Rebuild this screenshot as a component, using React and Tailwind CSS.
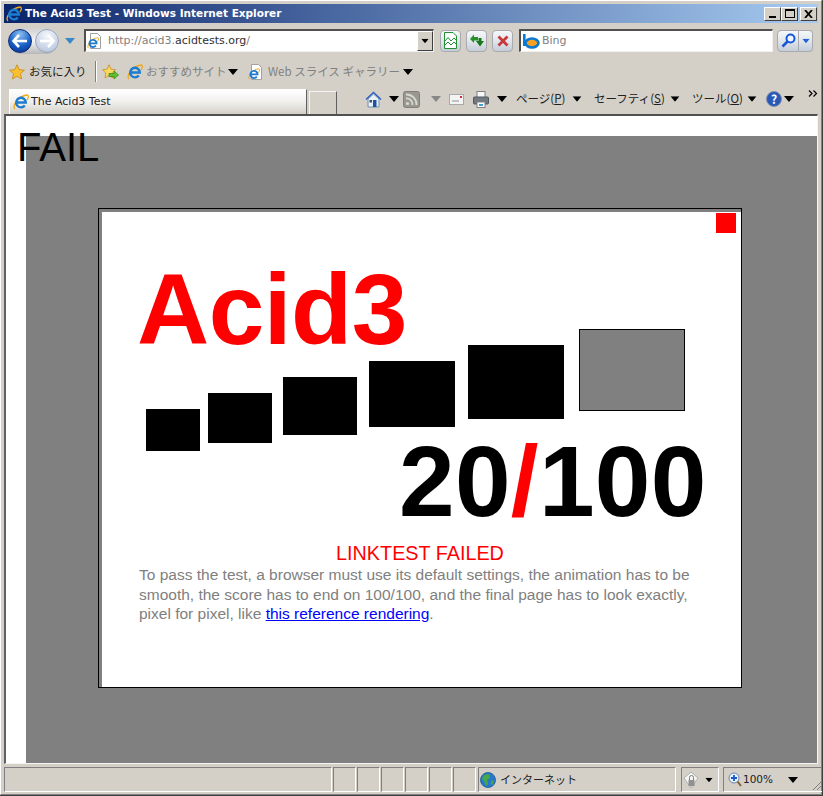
import React from 'react';

const arial = 'font-["Liberation_Sans",Arial,sans-serif]';
const ui = 'font-["Noto_Sans_CJK_JP","Noto_Sans",sans-serif]';
const dejavu = 'font-["DejaVu_Sans",sans-serif]';

function Arrow({ className = '', color = '#000' }) {
    return (
        <svg width="10" height="6" viewBox="0 0 10 6" className={`shrink-0 ${className}`}>
            <polygon points="0,0 10,0 5,6" fill={color} />
        </svg>
    );
}

function IeLogo({ size = 16, className = '' }) {
    return (
        <svg width={size} height={size} viewBox="0 0 16 16" className={`shrink-0 ${className}`}>
            <path d="M2 15 C-1 12 5 2 14 1 C16 1 15.500 4 14 6" fill="none" stroke="#f0a818" strokeWidth="1.300" />
            <path d="M4 8.500 H12.800 A4.800 4.800 0 1 0 11.800 11.500" fill="none" stroke="#1c7cd0" strokeWidth="2.400" />
        </svg>
    );
}

function PageIcon({ className = '' }) {
    return (
        <div className={`relative shrink-0 w-[15px] h-[16px] ${className}`}>
            <svg width="15" height="16" viewBox="0 0 15 16">
                <path d="M3.500 .5 H10.500 L13.500 3.500 V15.500 H3.500 Z" fill="#fff" stroke="#a0a0a0" />
            </svg>
            <IeLogo size={12} className="absolute left-0 top-[4px]" />
        </div>
    );
}

function Star({ className = '' }) {
    return (
        <svg width="16" height="16" viewBox="0 0 16 16" className={`shrink-0 ${className}`}>
            <polygon points="8,.8 10.200,5.600 15.400,6.200 11.500,9.700 12.600,15 8,12.300 3.400,15 4.500,9.700 .6,6.200 5.800,5.600" fill="#f8c030" stroke="#c88818" strokeWidth=".8" />
        </svg>
    );
}

function AddFavIcon({ className = '' }) {
    return (
        <svg width="17" height="16" viewBox="0 0 17 16" className={`shrink-0 ${className}`}>
            <polygon points="7,.8 9,5.200 13.600,5.800 10.200,9 11,14 7,11.500 3,14 3.800,9 .5,5.800 5,5.200" fill="#f8d860" stroke="#c89020" strokeWidth=".8" />
            <path d="M7 9.500 H12 V7 L16.500 11 L12 15 V12.500 H7 Z" fill="#60c030" stroke="#308010" strokeWidth=".7" />
        </svg>
    );
}

function GlassButton({ className = '', children }) {
    return (
        <div className={`flex items-center justify-center h-[22px] border border-[#a8aab0] rounded-[4px] bg-[linear-gradient(#f6f8fa,#e0e6ec_50%,#c4ccd6)] shrink-0 ${className}`}>
            {children}
        </div>
    );
}

function WinButton({ children, className = '' }) {
    return (
        <div className={`flex items-center justify-center h-[14px] bg-[#d4d0c8] border border-t-white border-l-white border-r-[#404040] border-b-[#404040] ${className}`}>
            {children}
        </div>
    );
}

function TitleBar() {
    return (
        <div className="flex items-center h-[19px] pl-[2px] pr-[1px] bg-[linear-gradient(90deg,#0a246a,#a6caf0)] shrink-0">
            <IeLogo size={16} />
            <span className={`ml-[3px] text-white font-bold text-[10.500px] leading-[19px] whitespace-nowrap ${dejavu}`}>The Acid3 Test - Windows Internet Explorer</span>
            <div className="ml-auto flex">
                <WinButton className="w-[17px]"><div className="w-[7px] h-[2px] bg-black mt-[7px] mr-[1px]" /></WinButton>
                <WinButton className="w-[17px]"><div className="w-[10px] h-[9px] border border-black border-t-2" /></WinButton>
                <WinButton className="w-[17px] ml-[2px]">
                    <svg width="9" height="8" viewBox="0 0 9 8"><path d="M1 0 L8 8 M8 0 L1 8" stroke="#000" strokeWidth="1.800" /></svg>
                </WinButton>
            </div>
        </div>
    );
}

function NavCircle({ light, flip }) {
    return (
        <div className={`flex items-center justify-center w-[24px] h-[24px] rounded-full border shrink-0 ${light ? 'border-[#98a4b8] bg-[radial-gradient(circle_at_50%_25%,#f4f7fb,#c4d0e4_70%,#a8b6d0)]' : 'border-[#102a70] bg-[radial-gradient(circle_at_50%_20%,#8cc0f0,#1860c8_55%,#0a2c88)]'}`}>
            <svg width="16" height="14" viewBox="0 0 16 14" className={flip ? 'rotate-180' : ''}>
                <path d="M7 1 L1.500 7 L7 13 M2 7 H15" fill="none" stroke="#fff" strokeWidth="2.600" />
            </svg>
        </div>
    );
}

function AddressRow() {
    return (
        <div className="flex items-center h-[33px] pl-[4px] pt-[2px] shrink-0">
            <div className="flex items-center gap-[3px] h-[26px] rounded-full bg-[linear-gradient(#d0d0d0,#f4f4f4_50%,#b8b8b8)]">
                <NavCircle />
                <NavCircle light flip />
            </div>
            <Arrow color="#3a88c8" className="ml-[6px]" />
            <div className="flex items-center w-[350px] h-[23px] ml-[9px] bg-white border-t-2 border-l-2 border-t-[#505050] border-l-[#505050] border-r border-b border-r-[#f0f0f0] border-b-[#f0f0f0]">
                <PageIcon className="ml-[1px]" />
                <span className={`ml-[6px] text-[11px] text-[#808080] whitespace-nowrap ${dejavu}`}>http://acid3.<span className="text-[#303030]">acidtests.org</span>/</span>
                <div className="ml-auto flex items-center justify-center w-[16px] h-[20px] bg-[#d4d0c8] border border-t-white border-l-white border-r-[#404040] border-b-[#404040]">
                    <Arrow className="scale-75" />
                </div>
            </div>
            <GlassButton className="w-[21px] ml-[6px]">
                <svg width="15" height="17" viewBox="0 0 15 17">
                    <path d="M1.500 .5 H10 L13.500 4 V16.500 H1.500 Z" fill="#fff" stroke="#209030" />
                    <path d="M2 9 L5 5.500 L8 9 L11 6 L13 8 M2 13 L5 10 L8 13 L11 10 L13 12" fill="none" stroke="#209030" />
                </svg>
            </GlassButton>
            <GlassButton className="w-[21px] ml-[5px]">
                <svg width="16" height="15" viewBox="0 0 16 15">
                    <path d="M1 6 L5 1.500 V4 H9 V7.500 H5 V10 Z" fill="#289028" />
                    <path d="M15 8 L11 13.500 L7 8 H9.500 V5 H12.500 V8 Z" fill="#187818" />
                </svg>
            </GlassButton>
            <GlassButton className="w-[21px] ml-[5px]">
                <svg width="12" height="12" viewBox="0 0 12 12"><path d="M1.500 1.500 L10.500 10.500 M10.500 1.500 L1.500 10.500" stroke="#c83838" strokeWidth="2.800" /></svg>
            </GlassButton>
            <div className="flex items-center w-[254px] h-[23px] ml-[6px] bg-white border-t-2 border-l-2 border-t-[#505050] border-l-[#505050] border-r border-b border-r-[#f0f0f0] border-b-[#f0f0f0]">
                <svg width="18" height="15" viewBox="0 0 18 15" className="ml-[1px] shrink-0">
                    <ellipse cx="10" cy="9" rx="6.500" ry="4.500" fill="#f8a020" stroke="#0878d0" strokeWidth="2.600" />
                    <rect x="1" y="0" width="2.600" height="12" fill="#0878d0" />
                </svg>
                <span className={`ml-[2px] text-[11px] text-[#808080] ${dejavu}`}>Bing</span>
            </div>
            <GlassButton className="w-[22px] ml-[4px] rounded-r-none">
                <svg width="15" height="15" viewBox="0 0 15 15">
                    <circle cx="9.500" cy="5.500" r="4" fill="#f0f6ff" stroke="#1858d8" strokeWidth="2" />
                    <path d="M6.500 8.500 L1.500 13.500" stroke="#1858d8" strokeWidth="2.600" />
                </svg>
            </GlassButton>
            <GlassButton className="w-[14px] rounded-l-none border-l-0">
                <Arrow color="#2060d0" className="scale-75" />
            </GlassButton>
        </div>
    );
}

function FavoritesRow() {
    return (
        <div className={`flex items-center h-[30px] pl-[5px] pt-[1px] text-[11.500px] shrink-0 ${ui}`}>
            <Star />
            <span className="ml-[4px] w-[56px] text-[#202020] whitespace-nowrap">お気に入り</span>
            <div className="ml-[10px] w-[2px] h-[21px] border-l border-l-[#808080] border-r border-r-white" />
            <AddFavIcon className="ml-[5px]" />
            <IeLogo className="ml-[8px]" />
            <span className="ml-[3px] w-[79px] text-[#808080] whitespace-nowrap">おすすめサイト</span>
            <Arrow className="ml-[3px]" />
            <PageIcon className="ml-[10px]" />
            <span className="ml-[5px] w-[130px] text-[#808080] whitespace-nowrap">Web スライス ギャラリー</span>
            <Arrow className="ml-[5px]" />
        </div>
    );
}

function MenuItem({ label, hot, width, className = '' }) {
    return (
        <span className={`text-[11.500px] text-[#202020] whitespace-nowrap ${className}`} style={{ width }}>
            {label}(<span className="underline">{hot}</span>)
        </span>
    );
}

function TabRow() {
    return (
        <div className={`flex items-end h-[28px] pl-[5px] shrink-0 ${ui}`}>
            <div className="flex items-center w-[298px] h-[25px] pl-[3px] border border-b-0 border-t-white border-l-white border-r-[#606060] bg-[linear-gradient(#ffffff,#f0efec_50%,#d4d0c8)]">
                <IeLogo />
                <span className={`ml-[2px] text-[11px] text-[#202020] whitespace-nowrap ${dejavu}`}>The Acid3 Test</span>
            </div>
            <div className="ml-[2px] w-[28px] h-[23px] border border-b-0 border-t-[#f4f4f4] border-l-[#f4f4f4] border-r-[#606060] bg-[#d4d0c8]" />
            <div className="flex items-center self-start w-[481px] h-[26px] mt-0">
                <svg width="17" height="17" viewBox="0 0 17 17" className="ml-[28px] shrink-0">
                    <path d="M1 8.500 L8.500 1.500 L16 8.500" fill="none" stroke="#3060c0" strokeWidth="1.600" />
                    <path d="M3 8 L8.500 3 L14 8 V16 H3 Z" fill="#e8f0f8" stroke="#7090b0" />
                    <rect x="8" y="9" width="3.500" height="7" fill="#2050a0" />
                    <rect x="4.500" y="9" width="2.500" height="2.500" fill="#405060" />
                </svg>
                <Arrow className="ml-[7px]" />
                <svg width="17" height="17" viewBox="0 0 17 17" className="ml-[4px] shrink-0">
                    <rect x=".5" y=".5" width="16" height="16" rx="2" fill="#989890" stroke="#808078" />
                    <circle cx="4.500" cy="12.500" r="1.600" fill="#d8d8d0" />
                    <path d="M3 7.500 A6 6 0 0 1 9.500 14 M3 3.500 A10 10 0 0 1 13.500 14" fill="none" stroke="#d8d8d0" strokeWidth="1.800" />
                </svg>
                <Arrow color="#888888" className="ml-[11px]" />
                <svg width="15" height="11" viewBox="0 0 15 11" className="ml-[8px] shrink-0">
                    <rect x=".5" y=".5" width="14" height="10" fill="#f4f4f4" stroke="#a8a8a8" />
                    <rect x="11" y="2" width="2" height="2" fill="#d03030" />
                    <path d="M3 7 H10" stroke="#909090" />
                </svg>
                <svg width="16" height="17" viewBox="0 0 16 17" className="ml-[9px] shrink-0">
                    <rect x="4" y=".5" width="8" height="6" fill="#f8f8f8" stroke="#808080" />
                    <rect x=".5" y="6" width="15" height="7" rx="1" fill="#707880" stroke="#505860" />
                    <rect x="4" y="11" width="8" height="5.500" fill="#fff" stroke="#808080" />
                    <rect x="6" y="13" width="4" height="2" fill="#40a0d0" />
                </svg>
                <Arrow className="ml-[8px]" />
                <MenuItem label="ページ" hot="P" className="ml-[9px]" width={50} />
                <Arrow className="ml-[6px] scale-90" />
                <MenuItem label="セーフティ" hot="S" className="ml-[12px]" width={71} />
                <Arrow className="ml-[5px] scale-90" />
                <MenuItem label="ツール" hot="O" className="ml-[12px]" width={51} />
                <Arrow className="ml-[4px] scale-90" />
                <div className="ml-[9px] flex items-center justify-center w-[16px] h-[16px] rounded-full bg-[#2858b8] border border-[#8090a8] text-white text-[12px] font-bold leading-none shrink-0">?</div>
                <Arrow className="ml-[2px]" />
                <svg width="10" height="7" viewBox="0 0 10 7" className="ml-[14px] mb-[12px] shrink-0">
                    <path d="M1 .5 L4 3.500 L1 6.500 M5.500 .5 L8.500 3.500 L5.500 6.500" fill="none" stroke="#000" strokeWidth="1.200" />
                </svg>
            </div>
        </div>
    );
}

function Bucket({ w, h, top, left, gray }) {
    return (
        <div
            className={gray ? 'shrink-0 bg-[#808080] border border-black' : 'shrink-0 bg-black'}
            style={{ width: w, height: h, marginTop: top, marginLeft: left }}
        />
    );
}

function AcidBox() {
    return (
        <div className={`ml-[72px] mt-[72px] w-[644px] h-[480px] bg-white border border-black ${arial}`}>
            <div className="w-full h-full border-t-[3px] border-l-[3px] border-[#808080] flex flex-col">
                <div className="self-end w-[20px] h-[20px] mt-[1px] mr-[5px] bg-[#ff0000] shrink-0" />
                <div className="mt-[28px] pl-[35px] h-[68px] text-[100px] leading-[96px] font-bold tracking-[-0.5px] text-[#ff0000] shrink-0">Acid3</div>
                <div className="flex items-start pl-[44px] h-[122px] shrink-0">
                    <Bucket w={54} h={42} top={80} left={0} />
                    <Bucket w={64} h={50} top={64} left={8} />
                    <Bucket w={74} h={58} top={48} left={11} />
                    <Bucket w={86} h={66} top={32} left={12} />
                    <Bucket w={96} h={74} top={16} left={13} />
                    <Bucket w={106} h={82} top={0} left={15} gray />
                </div>
                <div className="pl-[297px] h-[61px] text-[100px] leading-[61px] font-bold tracking-[0.3px] text-black whitespace-nowrap shrink-0">20<span className="text-[#ff0000]">/</span>100</div>
                <div className="mt-[30px] w-[636px] text-center text-[19.800px] leading-[22px] text-[#ff0000]">LINKTEST FAILED</div>
                <p className="mt-[1px] ml-[37px] text-[15.500px] leading-[19.500px] text-[#808080] whitespace-nowrap">
                    To pass the test, a browser must use its default settings, the animation has to be<br />
                    smooth, the score has to end on 100/100, and the final page has to look exactly,<br />
                    pixel for pixel, like <a className="text-[#0000ff] underline">this reference rendering</a>.
                </p>
            </div>
        </div>
    );
}

function Content() {
    return (
        <div className="relative flex-1 min-h-0 flex flex-col bg-white pl-[20px] pt-[20px] border-t-2 border-l-2 border-t-[#505050] border-l-[#606060] border-r border-b border-r-[#f4f4f4] border-b-[#f4f4f4]">
            <div className="flex-1 bg-[#808080] overflow-hidden">
                <AcidBox />
            </div>
            <div className={`absolute left-[11px] top-[8px] text-[40px] leading-[46px] text-black ${arial}`}>FAIL</div>
        </div>
    );
}

function StatusCell({ className = '', children }) {
    return (
        <div className={`h-[25px] flex items-center shrink-0 border border-t-[#808080] border-l-[#808080] border-r-white border-b-white ${className}`}>
            {children}
        </div>
    );
}

function StatusBar() {
    return (
        <div className={`flex items-end gap-[1px] h-[28px] shrink-0 ${ui}`}>
            <StatusCell className="w-[328px]" />
            {[0, 1, 2, 3, 4, 5].map((i) => (
                <StatusCell key={i} className="w-[23px]" />
            ))}
            <StatusCell className="w-[198px] ml-[1px]">
                <svg width="16" height="16" viewBox="0 0 16 16" className="ml-[1px] shrink-0">
                    <circle cx="8" cy="8" r="7.500" fill="#2878c8" stroke="#185898" strokeWidth=".8" />
                    <path d="M4 3 L9 2 L10 6 L7 8 L8 12 L6 14 L4 9 L2 7 Z M11 9 L14 8 L13 12 L11 13 Z" fill="#48a848" />
                </svg>
                <span className="ml-[4px] text-[11px] text-[#202020]">インターネット</span>
            </StatusCell>
            <StatusCell className="w-[38px] ml-[4px]">
                <svg width="16" height="18" viewBox="0 0 16 18" className="ml-[1px] shrink-0">
                    <path d="M8 1 L15 7 L8 17 L1 7 Z" fill="#f4f4f4" stroke="#b0b0b0" />
                    <rect x="5.500" y="9" width="6" height="6" fill="#909090" />
                    <path d="M6.500 9 V6.500 A2 2 0 0 1 10.500 6.500 V9" fill="none" stroke="#808080" />
                </svg>
                <Arrow className="ml-[5px] scale-75" />
            </StatusCell>
            <StatusCell className="w-[100px] ml-[3px] relative">
                <svg width="14" height="16" viewBox="0 0 14 16" className="ml-[4px] shrink-0">
                    <circle cx="6" cy="6" r="5" fill="#e8f0fa" stroke="#6888b0" />
                    <path d="M6 3 V9 M3 6 H9" stroke="#1858d0" strokeWidth="1.800" />
                    <path d="M9.500 9.500 L13 14" stroke="#806030" strokeWidth="2" />
                </svg>
                <span className={`ml-[1px] text-[10.500px] text-[#202020] ${dejavu}`}>100%</span>
                <Arrow className="ml-[15px]" />
                <svg width="12" height="12" viewBox="0 0 12 12" className="absolute right-0 bottom-0">
                    <path d="M11 3 L3 11 M11 7 L7 11" stroke="#808080" />
                </svg>
            </StatusCell>
        </div>
    );
}

export default function App() {
    return (
        <div className="w-[823px] h-[796px] bg-[#d4d0c8] border-r border-b border-r-[#404040] border-b-[#404040] overflow-hidden">
            <div className="flex flex-col w-full h-full pt-[3px] pl-[3px] pr-[3px] pb-[2px] border-t border-l border-t-white border-l-white border-r border-r-[#808080] border-b border-b-[#808080]">
                <TitleBar />
                <AddressRow />
                <FavoritesRow />
                <TabRow />
                <Content />
                <StatusBar />
            </div>
        </div>
    );
}
